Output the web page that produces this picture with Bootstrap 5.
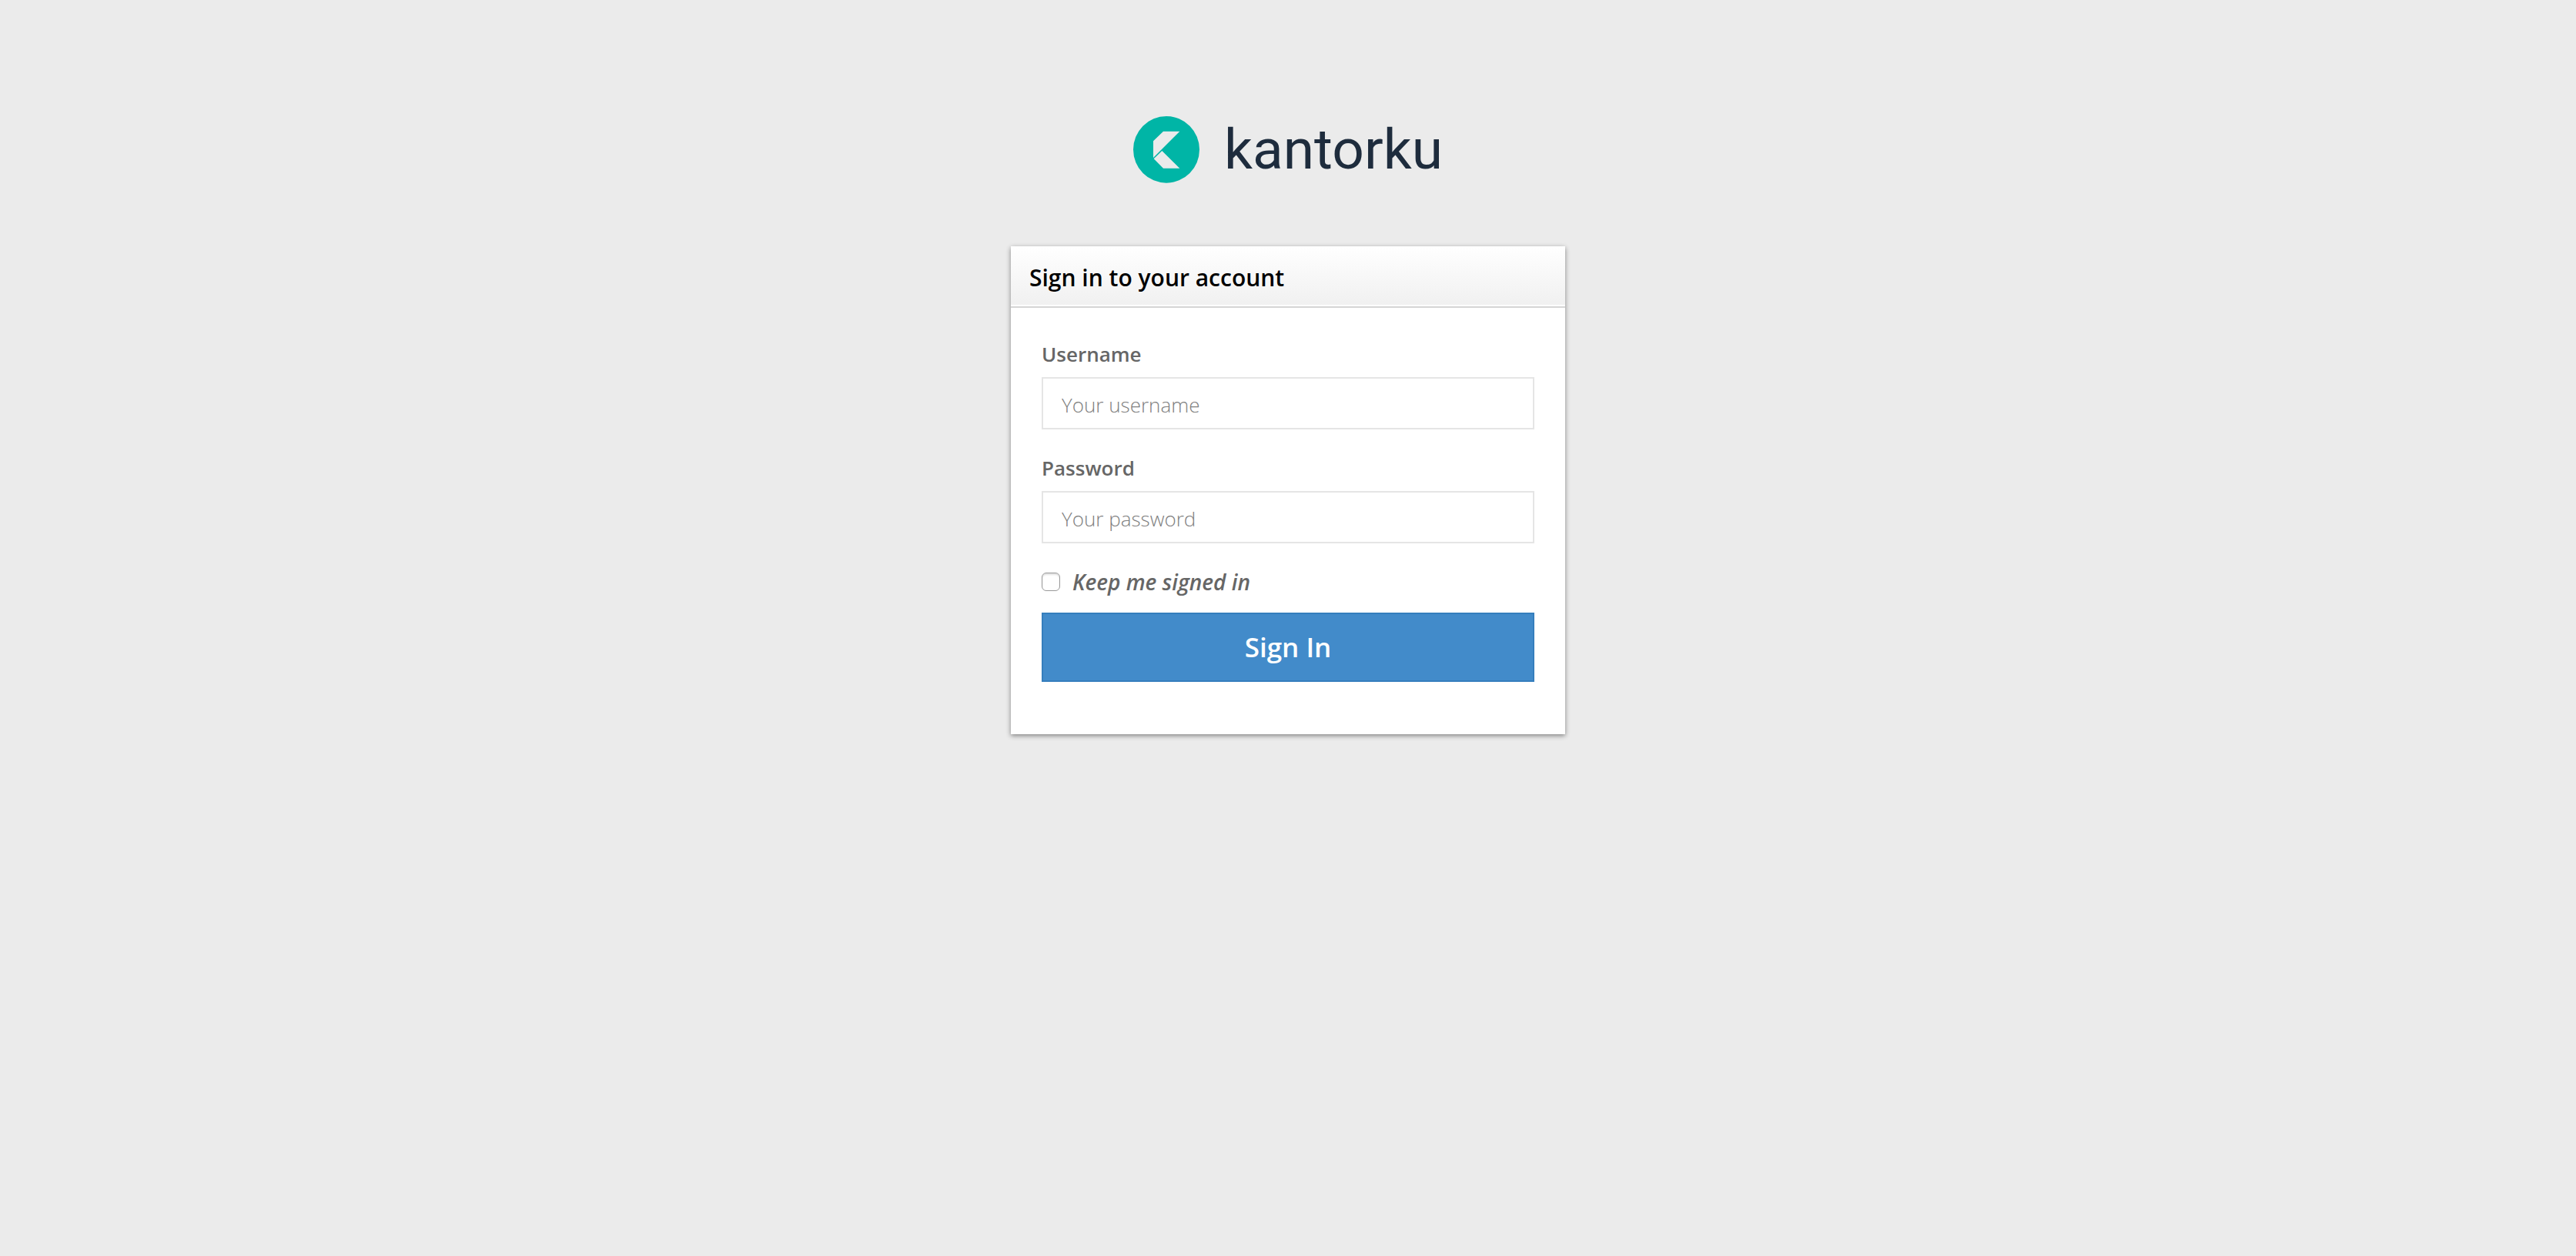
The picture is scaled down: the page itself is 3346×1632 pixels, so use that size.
<!DOCTYPE html>
<html lang="en">
<head>
<meta charset="utf-8">
<meta name="viewport" content="width=device-width, initial-scale=1">
<title>Kantorku - Sign in</title>
<link href="https://cdn.jsdelivr.net/npm/bootstrap@5.3.0/dist/css/bootstrap.min.css" rel="stylesheet">
<style>
  body { background: #ebebeb; color: #666; font-family: "Open Sans", "Noto Sans", sans-serif; font-size: 26px; line-height: 40px; }
  .login-page { padding-top: 150px; }
  .brand-row { gap: 32px; height: 88px; margin-bottom: 82px; }
  .brand-name { color: #1e2c3d; font-family: Roboto, sans-serif; font-size: 73px; line-height: 88px; }
  .login-panel { max-width: 720px; border: 0; border-radius: 0; box-shadow: 0 2px 6px rgba(0, 0, 0, .45); }
  .login-head { padding: 20px 24px 16px; background: linear-gradient(#fff, #f0f0f0); border-bottom: 2px solid #d5d5d5; border-radius: 0; box-shadow: inset 0 -2px #fff; }
  .login-head:first-child { border-radius: 0; }
  .login-title { color: #000; font-size: 30px; font-weight: 600; line-height: 42px; }
  .login-body { padding: 40px 40px 68px; }
  .form-label { font-weight: 600; margin-bottom: 10px; }
  .form-control { height: 68px; padding: 14px 24px 10px; border: 2px solid #e5e5e5; border-radius: 0; font-size: 26px; font-weight: 300; }
  .form-control::placeholder { color: #808080; }
  .field-group { margin-bottom: 30px; }
  .keep-row { gap: 16px; margin-bottom: 20px; }
  .keep-row .form-check-input { width: 24px; height: 24px; margin: 0; border: 1px solid #999; border-radius: 6px; box-shadow: inset 0 2px 2px rgba(0, 0, 0, .12); }
  .keep-label { font-size: 28px; font-style: italic; font-weight: 600; }
  .btn-signin { --bs-btn-color: #fff; --bs-btn-bg: #428bca; --bs-btn-border-color: #357ebd; --bs-btn-hover-color: #fff; --bs-btn-hover-bg: #357ebd; --bs-btn-hover-border-color: #285e8e; height: 90px; padding: 0; border-width: 2px; border-radius: 0; font-size: 35px; font-weight: 600; }
</style>
<script src="https://cdn.jsdelivr.net/npm/bootstrap@5.3.0/dist/js/bootstrap.bundle.min.js" defer></script>
</head>
<body class="min-vh-100">
<main class="login-page min-vh-100">
  <div class="brand-row d-flex justify-content-center align-items-center">
    <svg width="86" height="87" viewBox="0 0 258 261" aria-hidden="true">
      <ellipse cx="129" cy="130" rx="129" ry="130" fill="#00b5a6"/>
      <path d="M117 59H181L78 162V97ZM112 135L181 203H117L80 166Z" fill="#ebebeb"/>
    </svg>
    <span class="brand-name">kantorku</span>
  </div>
  <section class="login-panel card mx-auto">
    <div class="login-head card-header">
      <h1 class="login-title mb-0">Sign in to your account</h1>
    </div>
    <form class="login-body card-body">
      <div class="field-group">
        <label class="form-label d-block" for="username">Username</label>
        <input class="form-control" id="username" type="text" placeholder="Your username">
      </div>
      <div class="field-group">
        <label class="form-label d-block" for="password">Password</label>
        <input class="form-control" id="password" type="password" placeholder="Your password">
      </div>
      <div class="keep-row d-flex align-items-center">
        <input class="form-check-input" id="keep" type="checkbox">
        <label class="keep-label" for="keep">Keep me signed in</label>
      </div>
      <button class="btn btn-signin w-100" type="submit">Sign In</button>
    </form>
  </section>
</main>
</body>
</html>
